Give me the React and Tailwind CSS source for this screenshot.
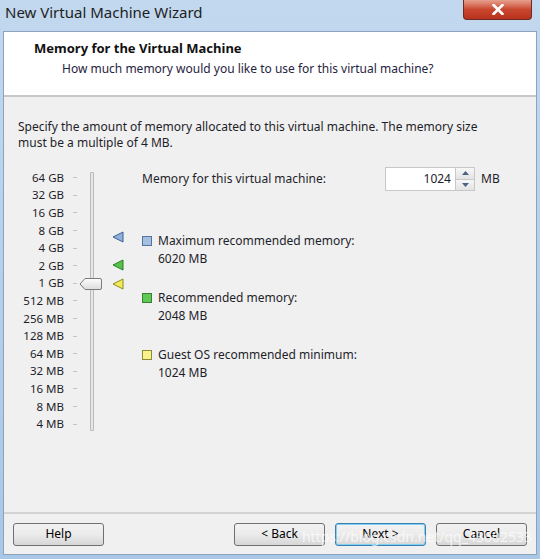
import React from "react";

const LEVELS = [
  "64 GB",
  "32 GB",
  "16 GB",
  "8 GB",
  "4 GB",
  "2 GB",
  "1 GB",
  "512 MB",
  "256 MB",
  "128 MB",
  "64 MB",
  "32 MB",
  "16 MB",
  "8 MB",
  "4 MB",
];

const ROW = 17.6;

const Marker = ({ top, fill, stroke }) => (
  <svg
    className="absolute left-[94px]"
    style={{ top }}
    width="12"
    height="12"
    viewBox="0 0 12 12"
  >
    <path d="M1 6 L11 1 L11 11 Z" fill={fill} stroke={stroke} strokeWidth="1" />
  </svg>
);

const Swatch = ({ color, border }) => (
  <span
    className={`inline-block w-[10px] h-[10px] border ${color} ${border} mr-[6px]`}
  />
);

const Button = ({ children, focus }) => (
  <button
    className={`w-[91px] h-[23px] rounded-[3px] border text-[12px] text-black bg-gradient-to-b from-[#f2f2f2] via-[#ebebeb] to-[#d6d6d6] ${
      focus ? "border-[#3c7fb1] shadow-[inset_0_0_0_1px_#7fd0f3]" : "border-[#707070]"
    }`}
  >
    {children}
  </button>
);

export default function App() {
  return (
    <div
      className="w-[540px] h-[559px] bg-gradient-to-b from-[#c2d8ee] to-[#a9c7e6] flex flex-col overflow-hidden"
      style={{ fontFamily: '"Noto Sans", "DejaVu Sans", sans-serif' }}
    >
      {/* title bar */}
      <div className="h-[31px] flex items-start justify-between shrink-0">
        <div className="pl-[5px] pt-px text-[15px] text-[#1e1e1e]">
          New Virtual Machine Wizard
        </div>
        <div className="mr-[8px] w-[69px] h-[20px] rounded-b-[4px] border border-t-0 border-[#6d2a22] bg-gradient-to-b from-[#e6a08f] via-[#c9462f] to-[#b8331c] flex items-center justify-center">
          <svg width="12" height="11" viewBox="0 0 12 11">
            <path
              d="M1.5 1 L10.5 10 M10.5 1 L1.5 10"
              stroke="#fff"
              strokeWidth="2.6"
              strokeLinecap="round"
            />
          </svg>
        </div>
      </div>

      {/* client area */}
      <div className="mx-[3px] mb-[4px] flex-1 flex flex-col border border-[#8aa4c0] bg-[#f0f0f0]">
        {/* header */}
        <div className="h-[65px] bg-white border-b-2 border-[#c8c8c8] pl-[30px] pt-[8px] shrink-0">
          <div className="text-[13px] font-bold text-[#111] leading-[17px]">
            Memory for the Virtual Machine
          </div>
          <div className="pl-[28px] pt-[4px] text-[12px] text-[#1f2440] leading-[16px]">
            How much memory would you like to use for this virtual machine?
          </div>
        </div>

        {/* body */}
        <div className="flex-1 px-[14px] pt-[22px] text-[12px] text-[#1e1e2a] leading-[16px]">
          <p className="w-[490px]">
            Specify the amount of memory allocated to this virtual machine. The
            memory size must be a multiple of 4 MB.
          </p>

          <div className="flex mt-[18px]">
            {/* slider */}
            <div className="relative w-[124px] h-[270px] shrink-0">
              <div className="flex flex-col">
                {LEVELS.map((l) => (
                  <div
                    key={l}
                    className="flex items-center h-[17.6px] text-[11.5px]"
                  >
                    <span className="w-[46px] text-right">{l}</span>
                    <span className="ml-[9px] w-[4px] h-px bg-[#c4c4c4]" />
                  </div>
                ))}
              </div>
              <div className="absolute left-[72px] top-[3px] w-[4px] h-[259px] border border-[#b9b9b9] bg-[#e7e7e7] rounded-[1px]" />
              {/* thumb */}
              <svg
                className="absolute left-[61px]"
                style={{ top: 6 * ROW + 2 }}
                width="24"
                height="14"
                viewBox="0 0 24 14"
              >
                <defs>
                  <linearGradient id="th" x1="0" y1="0" x2="0" y2="1">
                    <stop offset="0" stopColor="#fdfdfd" />
                    <stop offset="1" stopColor="#dcdcdc" />
                  </linearGradient>
                </defs>
                <path
                  d="M1 7 L6 1.5 L21 1.5 Q22.5 1.5 22.5 3 L22.5 11 Q22.5 12.5 21 12.5 L6 12.5 Z"
                  fill="url(#th)"
                  stroke="#7a7a7a"
                />
              </svg>
              <Marker top={4 * ROW - 8} fill="#8fb0d8" stroke="#3c5f9b" />
              <Marker top={5 * ROW + 2} fill="#55c24b" stroke="#2a7d22" />
              <Marker top={6 * ROW + 3} fill="#f1ea5a" stroke="#8f8a1e" />
            </div>

            {/* right column */}
            <div className="flex-1">
              <div className="flex items-center h-[24px] -mt-[2px]">
                <span className="w-[243px]">Memory for this virtual machine:</span>
                <div className="flex h-[24px] border border-[#c8c8c8] bg-white">
                  <span className="w-[69px] text-right pr-[4px] leading-[22px]">
                    1024
                  </span>
                  <div className="flex flex-col w-[19px] bg-[#f0f0f0] border-l border-[#c8c8c8]">
                    <div className="flex-1 border-b border-[#c8c8c8] flex items-center justify-center bg-gradient-to-b from-[#f7f7f7] to-[#e3e3e3]">
                      <svg width="7" height="4" viewBox="0 0 7 4">
                        <path d="M0 4 L3.5 0 L7 4 Z" fill="#4d6185" />
                      </svg>
                    </div>
                    <div className="flex-1 flex items-center justify-center bg-gradient-to-b from-[#f7f7f7] to-[#e3e3e3]">
                      <svg width="7" height="4" viewBox="0 0 7 4">
                        <path d="M0 0 L3.5 4 L7 0 Z" fill="#4d6185" />
                      </svg>
                    </div>
                  </div>
                </div>
                <span className="ml-[6px]">MB</span>
              </div>

              <div className="mt-[42px] flex flex-col gap-[23px]">
                <div>
                  <div className="flex items-center">
                    <Swatch color="bg-[#a5bfe0]" border="border-[#55739f]" />
                    Maximum recommended memory:
                  </div>
                  <div className="pl-[16px] pt-[2px]">6020 MB</div>
                </div>
                <div>
                  <div className="flex items-center">
                    <Swatch color="bg-[#5ec953]" border="border-[#3a7d33]" />
                    Recommended memory:
                  </div>
                  <div className="pl-[16px] pt-[2px]">2048 MB</div>
                </div>
                <div>
                  <div className="flex items-center">
                    <Swatch color="bg-[#f9f48a]" border="border-[#8d8a3a]" />
                    Guest OS recommended minimum:
                  </div>
                  <div className="pl-[16px] pt-[2px]">1024 MB</div>
                </div>
              </div>
            </div>
          </div>
        </div>

        {/* footer */}
        <div className="relative h-[42px] border-t-2 border-[#d3d3d3] flex items-center px-[9px] shrink-0">
          <Button>Help</Button>
          <div className="flex-1" />
          <div className="flex gap-[10px]">
            <Button>&lt; Back</Button>
            <Button focus>Next &gt;</Button>
            <Button>Cancel</Button>
          </div>
          <span className="absolute right-[4px] top-[12px] text-[14px] text-white/70 pointer-events-none">
            https://blog.csdn.net/qq_43602533
          </span>
        </div>
      </div>
    </div>
  );
}
